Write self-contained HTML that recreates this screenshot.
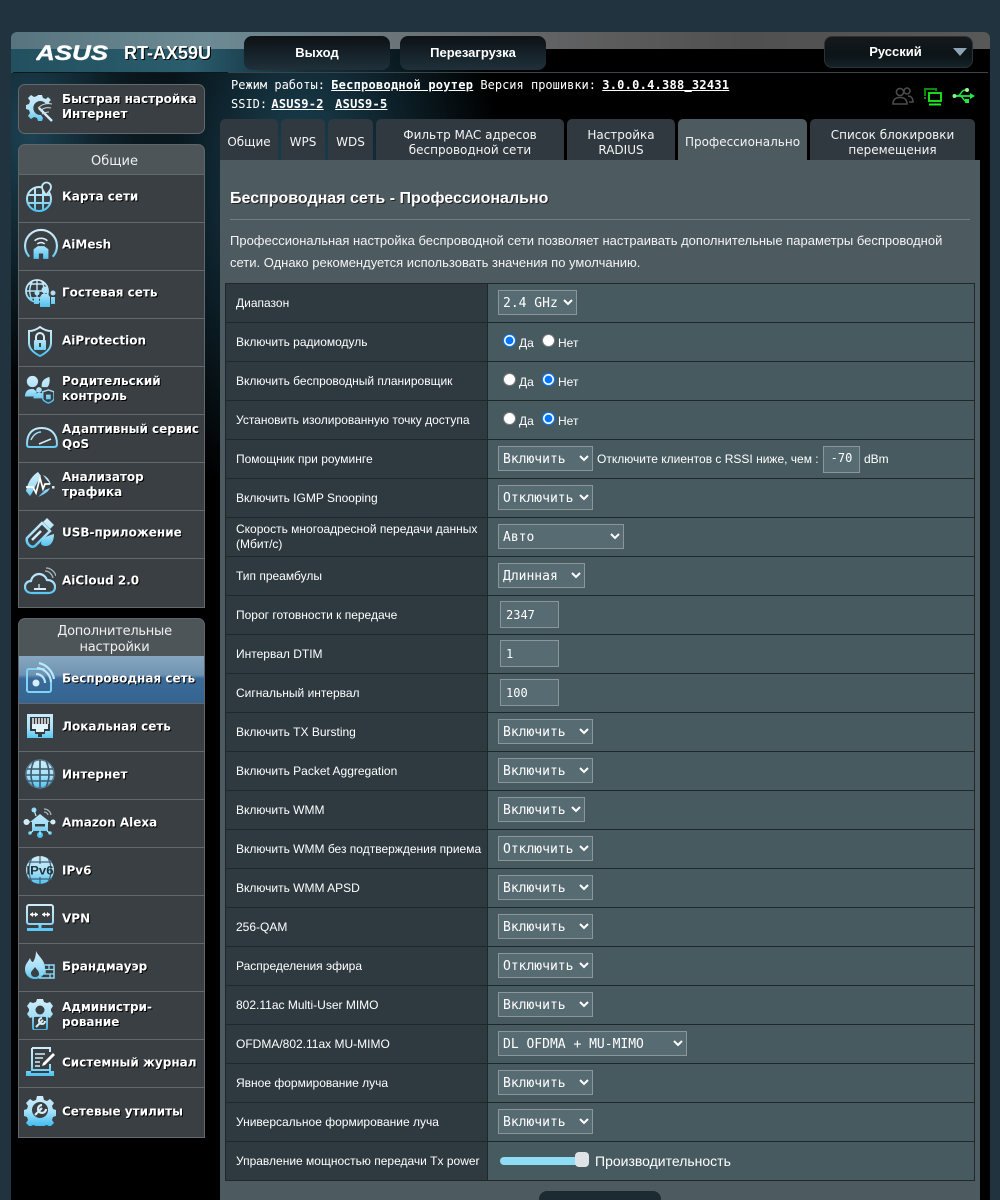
<!DOCTYPE html>
<html lang="ru"><head><meta charset="utf-8"><title>RT-AX59U</title>
<style>
*{box-sizing:border-box}
html,body{margin:0;padding:0;background:#21333f;overflow:hidden}
body{width:1000px;height:1200px;position:relative;font-family:"Liberation Sans",Arial,sans-serif;color:#fff}
.a{position:absolute}
#wrap{left:11px;top:32px;width:979px;height:1168px;border-radius:6px 6px 0 0;background:
 radial-gradient(ellipse 200px 330px at 290px 150px,rgba(30,72,90,.95),rgba(20,50,64,.6) 55%,rgba(0,0,0,0) 100%),
 radial-gradient(ellipse 150px 260px at 20px 100px,rgba(30,70,88,.95),rgba(0,0,0,0) 100%),
 #000;overflow:hidden}
#band{left:0;top:0;width:979px;height:17px;background:linear-gradient(90deg,#57747f 0,#6c8a94 20%,#6b7478 40%,#5d5d5d 60%,#505050 75%,#585858 100%)}
#band2{left:0;top:17px;width:300px;height:24px;background:linear-gradient(90deg,#23505f 0,#2a5d6d 60%,#1c4150 80%,rgba(0,0,0,0) 100%)}
#line{left:2px;top:40px;width:975px;height:1px;background:#3c4448}
#linedark{left:2px;top:40px;width:215px;height:1px;background:#0c1a20}
.hb{top:36px;height:34px;border-radius:8px;background:linear-gradient(180deg,#0d1114 0,#16232a 55%,#20303a 100%);font:bold 13px "Liberation Sans",sans-serif;text-align:center;line-height:34px;color:#fff}
.mono{font-family:"DejaVu Sans Mono","Liberation Mono",monospace;font-size:12px;white-space:pre;color:#fff}
.mono b{text-decoration:underline;letter-spacing:.25px}
.tab{top:119px;height:41px;background:#30393f;border-radius:5px 5px 0 0;font:12px/15px "DejaVu Sans",sans-serif;text-align:center;display:flex;align-items:center;justify-content:center;color:#f4f4f4;padding-top:6px}
.tab.s{padding-top:6px;line-height:15px}
.tab.on{background:#4d5a60}
#panel{left:220px;top:160px;width:760px;height:1040px;background:#4d5a60}
.box{left:18px;width:187px;background:#3a3f43;border:1px solid #62686c}
.hd{left:18px;width:187px;background:#4d5559;border:1px solid #5f666a;border-bottom:0;border-radius:7px 7px 0 0;text-align:center;font:13px/16px "DejaVu Sans",sans-serif;color:#f0f0f0;padding-left:6px}
.it{left:18px;width:187px;height:48px;background:#3a3f43;border-left:1px solid #62686c;border-right:1px solid #62686c;border-bottom:1px solid #62686c;color:#fff;font:bold 12px/15px "DejaVu Sans",sans-serif;text-shadow:1px 1px 0 #000}
.it span,.qs span{position:absolute;left:43px;top:50%;margin-top:-1px;transform:translateY(-50%);white-space:nowrap}
.qs span{margin-top:-2px}
.it.up span{margin-top:-2px}
.it svg,.qs svg{position:absolute;left:5px;top:6px;width:32px;height:32px}
.act{background:linear-gradient(180deg,#87a7c1 0,#6f93b1 40%,#3a6a98 48%,#356491 100%)}
#tbl{left:225px;top:283px;width:750px;height:898px;border:1px solid #1f272b;border-top:1px solid #1f272b}
.r{position:absolute;left:0;width:748px;height:39px;border-bottom:1px solid #1f272b;display:flex}
.l{width:262px;height:100%;background:#2f3a40;border-right:1px solid #1f272b;font-size:12px;line-height:15px;padding:0 0 0 10px;display:flex;align-items:center;color:#fff}
.v{flex:1;background:#475a60;position:relative;font-size:12px;color:#fff}
select{position:absolute;left:10px;top:6px;height:25px;background:#576b72;border:1px solid #8c9599;color:#fff;font:13px "DejaVu Sans Mono","Liberation Mono",monospace;padding:2px 0 0 0;margin:0;border-radius:0;outline:none}
input[type=text]{position:absolute;left:12px;top:5px;width:59px;height:27px;background:#576b72;border:1px solid #8c9599;color:#fff;font:12px "DejaVu Sans Mono",monospace;padding:0 5px;margin:0;outline:none}
.rd{position:absolute;top:0;left:0;height:100%;width:100%}
.rd input{position:absolute;margin:0;width:13px;height:13px;top:11px}
.rd span{position:absolute;top:13px;font-size:12px;line-height:14px}
.v .t{position:absolute;white-space:nowrap;line-height:14px}
svg text{font-family:"Liberation Sans",sans-serif}
</style></head><body>
<svg width="0" height="0" style="position:absolute"><defs>
<linearGradient id="g" gradientUnits="userSpaceOnUse" x1="0" y1="0" x2="0" y2="32"><stop offset="0" stop-color="#d5eef9"/><stop offset=".55" stop-color="#a6e0f8"/><stop offset="1" stop-color="#3fbdf0"/></linearGradient>
</defs></svg>

<div class="a" id="wrap">
 <div class="a" id="band"></div><div class="a" id="band2"></div><div class="a" id="line"></div><div class="a" id="linedark"></div>
</div>

<svg class="a" style="left:36px;top:44px" width="74" height="18"><text x="0" y="16" font-size="21" font-weight="bold" font-style="italic" fill="#ffffff" stroke="#ffffff" stroke-width=".4" textLength="72" lengthAdjust="spacingAndGlyphs">ASUS</text></svg>
<div class="a" style="left:124px;top:43px;font:bold 18px/20px 'Liberation Sans',sans-serif;text-shadow:1px 1px 0 #000;white-space:nowrap">RT-AX59U</div>

<div class="a hb" style="left:244px;width:146px">Выход</div>
<div class="a hb" style="left:400px;width:146px">Перезагрузка</div>
<div class="a hb" style="left:824px;top:36px;width:149px;height:32px;border:1px solid #2c3236;padding-right:6px;line-height:29px;background:linear-gradient(180deg,#15191c,#0b1417 60%,#142228)">Русский</div>
<svg class="a" style="left:952px;top:47px" width="16" height="10"><path d="M1 1H15L8 9Z" fill="#8da3b4"/></svg>

<div class="a mono" style="left:231px;top:78px;line-height:14px">Режим работы: <b style="margin-left:-1px">Беспроводной роутер</b> Версия прошивки: <b style="margin-left:-1px">3.0.0.4.388_32431</b></div>
<div class="a mono" style="left:231px;top:97px;line-height:14px">SSID: <b style="margin-left:-3px">ASUS9-2</b>  <b style="margin-left:-3px">ASUS9-5</b></div>

<svg class="a" style="left:892px;top:86px" width="22" height="20" fill="none" stroke="#4b4b4b" stroke-width="1.6"><circle cx="8" cy="6" r="3.6"/><path d="M1 18c0-5 3-6.500 7-6.500s7 1.500 7 6.500z"/><circle cx="15" cy="5" r="3"/><path d="M17 16h4c0-4-2-6-5-6"/></svg>
<svg class="a" style="left:923px;top:87px" width="20" height="19" fill="none"><path d="M2 9V2h11v2" stroke="#0a8a0a" stroke-width="2"/><path d="M2 10v3" stroke="#0a8a0a" stroke-width="2" stroke-dasharray="2 1"/><rect x="6" y="6" width="12" height="8" stroke="#1cf01c" stroke-width="1.800"/><path d="M6 17.500h12" stroke="#1cf01c" stroke-width="2"/></svg>
<svg class="a" style="left:952px;top:86px" width="24" height="20" fill="none"><path d="M1 10H19" stroke="#1fe84a" stroke-width="1.800"/><path d="M5 10C9 10 9 4 13 4M8 10C11 10 11 15 14 15" stroke="#1fe84a" stroke-width="1.500"/><circle cx="2.500" cy="10" r="2" fill="#7ff58f"/><circle cx="15" cy="4" r="2" fill="#9af7a6"/><rect x="13" y="13" width="4" height="4" fill="#1fe84a"/><path d="M18 7L23 10L18 13Z" fill="#1fe84a"/></svg>

<div class="a tab" style="left:220px;width:58px">Общие</div>
<div class="a tab" style="left:281px;width:44px">WPS</div>
<div class="a tab" style="left:328px;width:45px">WDS</div>
<div class="a tab s" style="left:376px;width:188px">Фильтр MAC адресов<br>беспроводной сети</div>
<div class="a tab s" style="left:567px;width:108px">Настройка<br>RADIUS</div>
<div class="a tab on" style="left:678px;width:129px">Профессионально</div>
<div class="a tab s" style="left:810px;width:165px">Список блокировки<br>перемещения</div>

<div class="a" id="panel"></div>
<div class="a" style="left:230px;top:189px;font:bold 16px/19px 'Liberation Sans',sans-serif;text-shadow:1px 1px 0 #222;white-space:nowrap">Беспроводная сеть - Профессионально</div>
<div class="a" style="left:230px;top:219px;width:740px;height:1px;background:#6f7d83"></div>
<div class="a" style="left:230px;top:230px;width:740px;font:13px/22px 'Liberation Sans',sans-serif;color:#f4f4f4">Профессиональная настройка беспроводной сети позволяет настраивать дополнительные параметры беспроводной сети. Однако рекомендуется использовать значения по умолчанию.</div>

<!-- sidebar -->
<div class="a box qs" style="top:84px;height:50px;border-radius:7px;font:bold 12px/15px 'DejaVu Sans',sans-serif;text-shadow:1px 1px 0 #000">
 <svg viewBox="0 0 32 32" style="left:7px;top:8px"><path d="M12 2h4l1 3 3 1 2-2 3 3-2 2 1 2h-4a7 7 0 1 0-5 11l2 3-1 3h-4l-1-3-3-1-3 2-3-3 2-3-1-3-3-1v-4l3-1 1-3-2-3 3-3 3 2 3-1z" fill="url(#g)"/><path d="M13 15L26 28" stroke="#cfeefa" stroke-width="2.500"/><path d="M12 15c4-4 9-5 14-4M14 18c3-3 7-4 11-3M16 21c2-1 4-2 7-2" stroke="#cfd8dc" fill="none"/></svg>
 <span>Быстрая настройка<br>Интернет</span></div>

<div class="a hd" style="top:144px;height:31px;line-height:33px">Общие</div>
<div class="a" style="left:19px;top:174px;width:185px;height:1px;background:#62686c"></div>

<div class="a it up" style="top:175px;height:48px"><svg viewBox="0 0 32 32"><circle cx="15" cy="18" r="12" fill="none" stroke="url(#g)" stroke-width="2"/><path d="M4 14H26M4 22H26M11 6V30M19 6V30" stroke="url(#g)" stroke-width="2" fill="none"/><path d="M22 14c-3-4-4-6-4-8a4.500 4.500 0 0 1 9 0c0 2-2 5-5 8z" fill="#3a3f43" stroke="#bfe8f9" stroke-width="1.800"/></svg><span>Карта сети</span></div>
<div class="a it up" style="top:223px"><svg viewBox="0 0 32 32" style="left:5px;top:5px;width:34px;height:34px"><path d="M5 27A15 15 0 1 1 27 27" fill="none" stroke="url(#g)" stroke-width="2"/><path d="M10 12a9 9 0 0 1 12 0M12.500 15a5.500 5.500 0 0 1 7 0" fill="none" stroke="#d5eef9" stroke-width="1.500"/><path d="M9 29V20L13 17H19L23 20V29H18V24H14V29Z" fill="url(#g)"/></svg><span>AiMesh</span></div>
<div class="a it up" style="top:271px"><svg viewBox="0 0 32 32"><circle cx="13" cy="14" r="11" fill="none" stroke="url(#g)" stroke-width="1.800"/><path d="M2 14H24M13 3V25M5 7H21M5 21H21M8 5C5 11 5 17 8 23M18 5C21 11 21 17 18 23" fill="none" stroke="url(#g)" stroke-width="1.400"/><circle cx="21" cy="13" r="3.500" fill="url(#g)"/><circle cx="13" cy="16" r="2.500" fill="url(#g)"/><circle cx="29" cy="16" r="2.500" fill="url(#g)"/><path d="M16 30V20L18 17H24L26 20V30Z" fill="url(#g)"/><path d="M10 27V20H15V27ZM27 27V20H31V27Z" fill="url(#g)"/></svg><span>Гостевая сеть</span></div>
<div class="a it up" style="top:319px"><svg viewBox="0 0 32 32"><path d="M16 2C12 5 9 6 5 6V18C5 24 10 28 16 31C22 28 27 24 27 18V6C23 6 20 5 16 2Z" fill="none" stroke="url(#g)" stroke-width="2"/><rect x="10" y="15" width="12" height="10" rx="1" fill="url(#g)"/><path d="M12 15V12a4 4 0 0 1 8 0v3" fill="none" stroke="#d5eef9" stroke-width="2"/><rect x="15" y="18" width="2" height="4" fill="#3a3f43"/></svg><span>AiProtection</span></div>
<div class="a it up" style="top:367px"><svg viewBox="0 0 32 32" style="left:5px;top:7px;width:30px;height:30px"><circle cx="9" cy="8" r="6" fill="url(#g)"/><path d="M1 24c0-6 4-8 7-8h2l4 3-4 5z" fill="url(#g)"/><path d="M19 14C18 8 21 5 27 3c1 5 0 9-2 11z" fill="url(#g)"/><circle cx="16" cy="17" r="3" fill="url(#g)"/><path d="M10 26c0-4 3-6 6-6s4 1 5 2v4z" fill="url(#g)"/><path d="M26 17l6 2v7c0 2-3 4-6 5-3-1-6-3-6-5v-7z" fill="#3a3f43" stroke="url(#g)" stroke-width="1.500"/><rect x="23.500" y="22" width="5" height="5" fill="url(#g)"/></svg><span>Родительский<br>контроль</span></div>
<div class="a it up" style="top:415px"><svg viewBox="0 0 32 32" style="left:7px;top:6px"><path d="M3 26H28Q31 26 31 23C31 12 24 7 15.500 7S1 12 1 23Q1 26 3 26Z" fill="none" stroke="url(#g)" stroke-width="2"/><path d="M13 23L25 18" stroke="#d5eef9" stroke-width="1.500"/><path d="M5 19C7 14 11 11 15 11" stroke="#9fdcf6" stroke-width="1.500" fill="none"/></svg><span>Адаптивный сервис<br>QoS</span></div>
<div class="a it up" style="top:463px"><svg viewBox="0 0 32 32"><path d="M2 22C4 12 9 6 14 3L17 7 13 14 8 24 6 27ZM14 28C18 26 24 24 26 19L21 21ZM19 6C24 8 26 12 27 16L22 10Z" fill="url(#g)"/><path d="M2 18H9L12 24 16 9 19 20 21 15H26" fill="none" stroke="#fff" stroke-width="1.700"/><rect x="28" y="17" width="2.500" height="2.500" fill="#d5eef9"/></svg><span>Анализатор<br>трафика</span></div>
<div class="a it up" style="top:511px"><svg viewBox="0 0 32 32"><path d="M3 21L18 6 26 14 11 29Q8 31 5 28Q2 25 3 21Z" fill="none" stroke="url(#g)" stroke-width="2.500"/><path d="M19 5L23 1 30 8 26 12Z" fill="url(#g)"/><path d="M8 23L17 14" stroke="#d5eef9" stroke-width="2.500"/><path d="M17 26C18 21 23 19 30 17C30 24 27 29 22 29C19 29 17 28 17 26Z" fill="url(#g)"/></svg><span>USB-приложение</span></div>
<div class="a it up" style="top:559px;height:49px"><svg viewBox="0 0 32 32"><path d="M8 28C3 28 1 25 1 22C1 18 4 16 7 16C8 11 12 9 15 9C19 9 22 12 23 15C28 15 31 18 31 22C31 26 28 28 24 28Z" fill="none" stroke="url(#g)" stroke-width="2.200"/><path d="M10 24H22" stroke="#d5eef9" stroke-width="2"/><path d="M15 24V19" stroke="#d5eef9" stroke-width="1.200"/><path d="M21 6C25 6 28 9 29 13M22 3C27 3 31 7 32 11" stroke="#a8b8c0" stroke-width="1.300" fill="none"/></svg><span>AiCloud 2.0</span></div>

<div class="a hd" style="top:618px;height:38px;padding-top:5px;letter-spacing:-.25px">Дополнительные<br>настройки</div>
<div class="a it act" style="top:656px;text-shadow:1px 1px 0 #000"><svg viewBox="0 0 32 32"><path d="M21 7H5a2 2 0 0 0-2 2v19a2 2 0 0 0 2 2h20a2 2 0 0 0 2-2V20" fill="none" stroke="#7fd4f5" stroke-width="2"/><circle cx="12" cy="21" r="3.500" fill="#d5eef9"/><path d="M12 12a9 9 0 0 1 9 9M13 6a15 15 0 0 1 14 14M15 1a20 20 0 0 1 15 16" fill="none" stroke="#b8e8fa" stroke-width="2.200"/></svg><span>Беспроводная сеть</span></div>
<div class="a it" style="top:704px"><svg viewBox="0 0 32 32"><rect x="3" y="4" width="26" height="24" fill="url(#g)"/><path d="M6 7H26V21H21V24H18V27H14V24H11V21H6Z" fill="#353a3e"/><path d="M9 8V14M12 8V14M15 8V14M18 8V14M21 8V14M24 8V14" stroke="#fff" stroke-width="1.400"/><path d="M8 14H24V19H20V22H12V19H8Z" fill="#e3f4fb"/></svg><span>Локальная сеть</span></div>
<div class="a it" style="top:752px"><svg viewBox="0 0 32 32"><circle cx="16" cy="16" r="14" fill="url(#g)" stroke="#5d7f96" stroke-width="1.500"/><path d="M3 11H29M2 17H30M3 23H29M16 2V30M10 3C6 11 6 21 10 29M22 3C26 11 26 21 22 29" stroke="#3a5a6f" stroke-width="1.600" fill="none"/></svg><span>Интернет</span></div>
<div class="a it" style="top:800px"><svg viewBox="0 0 34 32" style="left:3px;width:36px"><path d="M17 8L7 16H9V25H25V16H27Z" fill="url(#g)"/><rect x="12" y="18" width="10" height="2.500" fill="#3a3f43"/><circle cx="3.500" cy="16" r="3" fill="#d5eef9"/><circle cx="30" cy="16" r="2.500" fill="#d5eef9"/><circle cx="11" cy="4" r="2.500" fill="#8fdcf8"/><circle cx="17" cy="29" r="3" fill="#4dc4f2"/><circle cx="7" cy="27" r="1.800" fill="#6fd0f5"/><circle cx="27" cy="27" r="1.800" fill="#6fd0f5"/><path d="M7 16H3M27 16H30M11 4L13 10M17 25V29M10 25L7 27M24 25L27 27" stroke="#bde9fa" stroke-width="1.200"/><path d="M21 3a7 7 0 0 1 7 6M21 6a4 4 0 0 1 4 3" fill="none" stroke="#a8b8c0" stroke-width="1.300"/></svg><span>Amazon Alexa</span></div>
<div class="a it" style="top:848px"><svg viewBox="0 0 32 32"><circle cx="16" cy="16" r="14" fill="url(#g)"/><path d="M8 4C4 11 4 21 8 28M24 4C28 11 28 21 24 28M16 2V10M16 23V30M4 8H28M4 25H28" stroke="#3f5f74" stroke-width="1.200" fill="none"/><text x="16" y="20.500" font-size="11.500" font-weight="bold" text-anchor="middle" fill="#24343d" style="text-shadow:none" textLength="27" lengthAdjust="spacingAndGlyphs">IPv6</text></svg><span>IPv6</span></div>
<div class="a it" style="top:896px"><svg viewBox="0 0 32 32"><rect x="3" y="3" width="26" height="19" rx="2" fill="none" stroke="url(#g)" stroke-width="2"/><path d="M6 12.500H14M18 12.500H26" stroke="#fff" stroke-width="1.600"/><path d="M6 12.500L9 10V15ZM14 12.500L11 10V15ZM18 12.500L21 10V15ZM26 12.500L23 10V15Z" fill="#fff"/><path d="M16 22V27" stroke="url(#g)" stroke-width="3"/><path d="M3 27.500H29" stroke="#5cc8f3" stroke-width="3"/></svg><span>VPN</span></div>
<div class="a it" style="top:944px"><svg viewBox="0 0 32 32"><path d="M12 1C14 6 21 10 21 18C21 25 17 29 11 29C5 29 1 25 1 19C1 14 4 12 6 8C7 11 8 12 9 12C11 9 12 5 12 1Z" fill="url(#g)"/><path d="M11 17C13 20 15 21 15 24C15 26 13 27 11 27C9 27 7 26 7 23C7 21 10 19 11 17Z" fill="#3a3f43"/><path d="M19 15H30V28H15" fill="none" stroke="#8fdcf8" stroke-width="1.500"/><path d="M20 19.500H30M16 24H30M25 15V19.500M21 19.500V24M26 24V28" stroke="#8fdcf8" stroke-width="1.300"/></svg><span>Брандмауэр</span></div>
<div class="a it" style="top:992px"><svg viewBox="0 0 32 32"><path d="M13 1h6l1 3 3 1 3-1 3 4-2 3v2l2 3-3 4-3-1-3 1-1 2h-6l-1-2-3-1-3 1-3-4 2-3v-2l-2-3 3-4 3 1 3-1z" fill="url(#g)"/><circle cx="16" cy="12" r="4.500" fill="#3a3f43"/><rect x="9" y="18" width="14" height="14" rx="2" fill="#3a3f43" stroke="url(#g)" stroke-width="1.800"/><path d="M12 29L19 22M18 20a3 3 0 1 0 3 3" stroke="#d5eef9" stroke-width="2" fill="none"/></svg><span>Администри-<br>рование</span></div>
<div class="a it" style="top:1040px"><svg viewBox="0 0 32 32"><path d="M8 2H26V6M8 2V24H26V18" fill="none" stroke="url(#g)" stroke-width="2"/><path d="M11 8H21M11 12H19M11 16H16M11 20H16" stroke="#d5eef9" stroke-width="1.600"/><path d="M29 7L31 9 21 19 18 20 19 17Z" fill="#fff"/><path d="M2 25H7V27H25V25H30V30H2Z" fill="url(#g)"/></svg><span>Системный журнал</span></div>
<div class="a it" style="top:1088px;height:50px"><svg viewBox="0 0 32 32"><path d="M13 2h6l1 4 3 1 3-2 4 4-2 3 1 3 3 1v6l-3 1-1 3 2 3-4 4-3-2-3 1-1 3h-6l-1-3-3-1-3 2-4-4 2-3-1-3-3-1v-6l3-1 1-3-2-3 4-4 3 2 3-1z" fill="url(#g)"/><circle cx="16" cy="16" r="8" fill="#3a3f43"/><path d="M11 21L18 14M18 11a4 4 0 1 0 4 4" stroke="#d5eef9" stroke-width="2.200" fill="none"/></svg><span>Сетевые утилиты</span></div>

<!-- table -->
<div class="a" id="tbl">
<div class="r" style="top:0"><div class="l">Диапазон</div><div class="v"><select style="width:79px"><option>2.4 GHz</option></select></div></div>
<div class="r" style="top:39px"><div class="l">Включить радиомодуль</div><div class="v"><div class="rd"><input type="radio" name="a" checked style="left:15px"><span style="left:31px">Да</span><input type="radio" name="a" style="left:54px"><span style="left:70px">Нет</span></div></div></div>
<div class="r" style="top:78px"><div class="l">Включить беспроводный планировщик</div><div class="v"><div class="rd"><input type="radio" name="b" style="left:15px"><span style="left:31px">Да</span><input type="radio" name="b" checked style="left:54px"><span style="left:70px">Нет</span></div></div></div>
<div class="r" style="top:117px"><div class="l">Установить изолированную точку доступа</div><div class="v"><div class="rd"><input type="radio" name="c" style="left:15px"><span style="left:31px">Да</span><input type="radio" name="c" checked style="left:54px"><span style="left:70px">Нет</span></div></div></div>
<div class="r" style="top:156px"><div class="l">Помощник при роуминге</div><div class="v"><select style="width:95px"><option>Включить</option></select><span class="t" style="left:109px;top:12px">Отключите клиентов с RSSI ниже, чем :</span><input type="text" value="-70" style="left:335px;top:6px;width:37px;text-align:center;padding:0 0 3px 0"><span class="t" style="left:376px;top:12px">dBm</span></div></div>
<div class="r" style="top:195px"><div class="l">Включить IGMP Snooping</div><div class="v"><select style="width:95px"><option>Отключить</option></select></div></div>
<div class="r" style="top:234px"><div class="l">Скорость многоадресной передачи данных<br>(Мбит/с)</div><div class="v"><select style="width:126px"><option>Авто</option></select></div></div>
<div class="r" style="top:273px"><div class="l">Тип преамбулы</div><div class="v"><select style="width:87px"><option>Длинная</option></select></div></div>
<div class="r" style="top:312px"><div class="l">Порог готовности к передаче</div><div class="v"><input type="text" value="2347"></div></div>
<div class="r" style="top:351px"><div class="l">Интервал DTIM</div><div class="v"><input type="text" value="1"></div></div>
<div class="r" style="top:390px"><div class="l">Сигнальный интервал</div><div class="v"><input type="text" value="100"></div></div>
<div class="r" style="top:429px"><div class="l">Включить TX Bursting</div><div class="v"><select style="width:95px"><option>Включить</option></select></div></div>
<div class="r" style="top:468px"><div class="l">Включить Packet Aggregation</div><div class="v"><select style="width:95px"><option>Включить</option></select></div></div>
<div class="r" style="top:507px"><div class="l">Включить WMM</div><div class="v"><select style="width:87px"><option>Включить</option></select></div></div>
<div class="r" style="top:546px"><div class="l">Включить WMM без подтверждения приема</div><div class="v"><select style="width:95px"><option>Отключить</option></select></div></div>
<div class="r" style="top:585px"><div class="l">Включить WMM APSD</div><div class="v"><select style="width:95px"><option>Включить</option></select></div></div>
<div class="r" style="top:624px"><div class="l">256-QAM</div><div class="v"><select style="width:95px"><option>Включить</option></select></div></div>
<div class="r" style="top:663px"><div class="l">Распределения эфира</div><div class="v"><select style="width:95px"><option>Отключить</option></select></div></div>
<div class="r" style="top:702px"><div class="l">802.11ac Multi-User MIMO</div><div class="v"><select style="width:95px"><option>Включить</option></select></div></div>
<div class="r" style="top:741px"><div class="l">OFDMA/802.11ax MU-MIMO</div><div class="v"><select style="width:189px"><option>DL OFDMA + MU-MIMO</option></select></div></div>
<div class="r" style="top:780px"><div class="l">Явное формирование луча</div><div class="v"><select style="width:95px"><option>Включить</option></select></div></div>
<div class="r" style="top:819px"><div class="l">Универсальное формирование луча</div><div class="v"><select style="width:95px"><option>Включить</option></select></div></div>
<div class="r" style="top:858px"><div class="l">Управление мощностью передачи Tx power</div><div class="v"><div class="a" style="left:12px;top:15px;width:80px;height:8px;border-radius:4px;background:#8fdcf5"></div><div class="a" style="left:87px;top:10px;width:14px;height:15px;border-radius:4px;background:#dfe3e5"></div><span class="t" style="left:107px;top:11px;font-size:14px;line-height:17px">Производительность</span></div></div>
</div>
<div class="a" style="left:539px;top:1191px;width:122px;height:12px;border-radius:8px 8px 0 0;background:#1c2a31"></div>
</body></html>
